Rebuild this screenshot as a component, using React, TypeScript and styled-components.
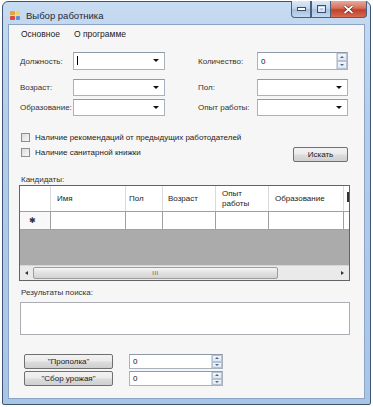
import styled, { createGlobalStyle } from "styled-components";

const GlobalStyle = createGlobalStyle`
  body {
    margin: 0;
    background: #ffffff;
    font-family: "Liberation Sans", Arial, sans-serif;
    font-size: 8px;
    color: #1b1b1b;
  }
`;

const Page = styled.div`
  width: 373px;
  height: 407px;
  padding: 1px 0 0 2px;
  box-sizing: border-box;
`;

const Window = styled.div`
  width: 369px;
  height: 404px;
  box-sizing: border-box;
  border: 1px solid #3d5475;
  border-radius: 6px 6px 2px 2px;
  background: linear-gradient(to bottom, #c7dbf1 0%, #b3cdea 30%, #a9c5e6 100%);
  padding: 0 5px 5px 5px;
  display: flex;
  flex-direction: column;
`;

const TitleBar = styled.div`
  height: 22px;
  display: flex;
  align-items: flex-start;
`;

const AppIcon = styled.div`
  width: 10px;
  height: 9px;
  margin: 9px 0 0 2px;
  display: grid;
  grid-template-columns: 1fr 1fr;
  gap: 1px;
`;

const IconCell = styled.div<{ $c: string }>`
  background: ${(p) => p.$c};
  border-radius: 1px;
`;

const Title = styled.span`
  margin: 8px 0 0 6px;
  font-size: 9.5px;
  color: #1e2a38;
`;

const Caption = styled.div`
  margin-left: auto;
  margin-right: -2px;
  display: flex;
  height: 17px;
  margin-top: -1px;
`;

const CapBtn = styled.div<{ $w: number; $close?: boolean }>`
  width: ${(p) => p.$w}px;
  height: 17px;
  box-sizing: border-box;
  border: 1px solid #4a5f80;
  border-top: none;
  border-left-width: ${(p) => (p.$close ? 0 : 1)}px;
  background: ${(p) =>
    p.$close
      ? "linear-gradient(to bottom, #e9a99a 0%, #d5705c 45%, #c0412a 55%, #d76b4f 100%)"
      : "linear-gradient(to bottom, #dce8f5 0%, #c2d5ec 45%, #a8c0df 55%, #c4d8ef 100%)"};
  border-radius: ${(p) => (p.$close ? "0 0 4px 0" : "0")};
  display: flex;
  align-items: center;
  justify-content: center;
  &:first-child {
    border-radius: 0 0 0 4px;
  }
`;

const Client = styled.div`
  flex: 1;
  background: #f6f6f6;
  border: 1px solid #8ca5c6;
  display: flex;
  flex-direction: column;
  padding: 0 14px 0 11px;
`;

const MenuBar = styled.div`
  height: 18px;
  display: flex;
  align-items: center;
  gap: 14px;
  font-size: 8.5px;
  color: #1a1a1a;
  margin-left: 1px;
`;

const Fields = styled.div`
  margin-top: 9px;
  display: grid;
  grid-template-columns: 53px 92px 33px 59px 91px;
  grid-template-rows: 18px 9px 17px 3px 17px;
  align-items: center;
`;

const FieldLabel = styled.span<{ $col: number; $row: number }>`
  grid-column: ${(p) => p.$col};
  grid-row: ${(p) => p.$row};
  color: #333;
  white-space: nowrap;
`;

const Combo = styled.div<{ $col: number; $row: number; $caret?: boolean }>`
  grid-column: ${(p) => p.$col};
  grid-row: ${(p) => p.$row};
  height: 17px;
  box-sizing: border-box;
  border: 1px solid #a9b3bf;
  border-top-color: #8e9aa8;
  background: #fff;
  position: relative;
  ${(p) =>
    p.$caret &&
    `&::before {
      content: "";
      position: absolute;
      left: 3px;
      top: 3px;
      width: 1px;
      height: 9px;
      background: #000;
    }`}
  &::after {
    content: "";
    position: absolute;
    right: 5px;
    top: 6px;
    border-left: 3px solid transparent;
    border-right: 3px solid transparent;
    border-top: 3px solid #111;
  }
`;

const NumCell = styled.div<{ $col: number; $row: number }>`
  grid-column: ${(p) => p.$col};
  grid-row: ${(p) => p.$row};
`;

const Numeric = styled.div<{ $h?: number }>`
  height: ${(p) => p.$h ?? 15}px;
  box-sizing: border-box;
  border: 1px solid #a9b3bf;
  border-top-color: #8e9aa8;
  background: #fff;
  display: flex;
  align-items: center;
`;

const NumText = styled.span`
  flex: 1;
  padding-left: 3px;
  color: #111;
`;

const Spinner = styled.div`
  width: 10px;
  height: 100%;
  display: flex;
  flex-direction: column;
  border-left: 1px solid #d0d7e0;
`;

const SpinHalf = styled.div<{ $up?: boolean }>`
  flex: 1;
  background: linear-gradient(to bottom, #f4f7fb, #dfe7f1);
  border: 1px solid #b5c2d3;
  display: flex;
  align-items: center;
  justify-content: center;
  &::after {
    content: "";
    border-left: 2px solid transparent;
    border-right: 2px solid transparent;
    ${(p) => (p.$up ? "border-bottom: 2px solid #4a6890;" : "border-top: 2px solid #4a6890;")}
  }
`;

const Checks = styled.div`
  margin-top: 16px;
  display: flex;
  flex-direction: column;
  gap: 5px;
  padding-right: 2px;
`;

const CheckRow = styled.div`
  display: flex;
  align-items: center;
  gap: 5px;
  height: 10px;
  padding-left: 1px;
`;

const Box = styled.span`
  width: 9px;
  height: 9px;
  box-sizing: border-box;
  border: 1px solid #8e8f8f;
  background: linear-gradient(135deg, #dcdcdc, #f7f7f7);
`;

const PushButton = styled.div<{ $w?: number }>`
  width: ${(p) => (p.$w ? `${p.$w}px` : "auto")};
  height: 15px;
  box-sizing: border-box;
  border: 1px solid #707070;
  border-radius: 2px;
  background: linear-gradient(to bottom, #f2f2f2 0%, #ebebeb 48%, #dddddd 52%, #cfcfcf 100%);
  display: flex;
  align-items: center;
  justify-content: center;
  color: #1a1a1a;
`;

const SearchButton = styled(PushButton)`
  margin-left: auto;
  align-self: flex-start;
  margin-bottom: -5px;
`;

const SectionLabel = styled.div<{ $top: number }>`
  margin-top: ${(p) => p.$top}px;
  height: 11px;
  line-height: 11px;
  color: #333;
  padding-left: 1px;
`;

const DataGrid = styled.div`
  width: 331px;
  height: 96px;
  box-sizing: border-box;
  border: 1px solid #646464;
  display: flex;
  flex-direction: column;
  background: #ababab;
  margin-left: -1px;
  overflow: hidden;
`;

const GridRow = styled.div<{ $h: number }>`
  height: ${(p) => p.$h}px;
  display: grid;
  grid-template-columns: 31px 75px 37px 53px 53px 75px 1fr;
  background: #fff;
  border-bottom: 1px solid #a0a0a0;
  box-sizing: border-box;
`;

const Cell = styled.div<{ $header?: boolean; $pad?: number }>`
  border-right: 1px solid ${(p) => (p.$header ? "#dadada" : "#a0a0a0")};
  display: flex;
  align-items: center;
  padding-left: ${(p) => p.$pad ?? 6}px;
  line-height: 10px;
  color: #222;
  overflow: hidden;
  white-space: nowrap;
  &:last-child {
    border-right: none;
  }
`;

const NewRowMark = styled(Cell)`
  padding-left: 9px;
  font-size: 8px;
  color: #333;
  background: #f8f8f8;
`;

const ClippedMark = styled.div`
  width: 2px;
  height: 10px;
  background: #333;
  margin-top: -4px;
`;

const GrayArea = styled.div`
  flex: 1;
`;

const HScroll = styled.div`
  height: 14px;
  display: flex;
  align-items: stretch;
  background: #eaeaea;
  border-top: 1px solid #d6d6d6;
`;

const ScrollArrow = styled.div<{ $right?: boolean }>`
  width: 13px;
  display: flex;
  align-items: center;
  justify-content: center;
  &::after {
    content: "";
    border-top: 2px solid transparent;
    border-bottom: 2px solid transparent;
    ${(p) => (p.$right ? "border-left: 3px solid #333;" : "border-right: 3px solid #333;")}
  }
`;

const Thumb = styled.div`
  width: 245px;
  margin: 1px 0;
  box-sizing: border-box;
  border: 1px solid #9c9c9c;
  border-radius: 2px;
  background: linear-gradient(to bottom, #f5f5f5, #e1e1e1 50%, #d3d3d3);
  display: flex;
  align-items: center;
  justify-content: center;
  font-size: 6px;
  letter-spacing: 0.5px;
  color: #555;
`;

const Track = styled.div`
  flex: 1;
`;

const ResultBox = styled.div`
  margin-top: 4px;
  width: 330px;
  height: 33px;
  box-sizing: border-box;
  border: 1px solid #abadb3;
  background: #fff;
`;

const Actions = styled.div`
  margin-top: 19px;
  display: grid;
  grid-template-columns: 89px 94px;
  column-gap: 16px;
  row-gap: 2px;
  padding-left: 4px;
`;

function Spin() {
  return (
    <Spinner>
      <SpinHalf $up />
      <SpinHalf />
    </Spinner>
  );
}

export default function App() {
  return (
    <Page>
      <GlobalStyle />
      <Window>
        <TitleBar>
          <AppIcon>
            <IconCell $c="#e8a23a" />
            <IconCell $c="#f3d257" />
            <IconCell $c="#d84a3a" />
            <IconCell $c="#5b8fd6" />
          </AppIcon>
          <Title>Выбор работника</Title>
          <Caption>
            <CapBtn $w={20}>
              <svg width="9" height="4" viewBox="0 0 9 4">
                <rect x="0.5" y="0.5" width="8" height="3" fill="#fff" stroke="#3b4f6e" />
              </svg>
            </CapBtn>
            <CapBtn $w={20}>
              <svg width="9" height="8" viewBox="0 0 9 8">
                <rect x="0.5" y="0.5" width="8" height="7" fill="none" stroke="#3b4f6e" />
                <rect x="2" y="2.5" width="5" height="3.5" fill="none" stroke="#fff" />
              </svg>
            </CapBtn>
            <CapBtn $w={36} $close>
              <svg width="11" height="9" viewBox="0 0 11 9">
                <path d="M1.5 1 L9.5 8 M9.5 1 L1.5 8" stroke="#5a1a10" strokeWidth="3" />
                <path d="M1.5 1 L9.5 8 M9.5 1 L1.5 8" stroke="#fff" strokeWidth="1.8" />
              </svg>
            </CapBtn>
          </Caption>
        </TitleBar>
        <Client>
          <MenuBar>
            <span>Основное</span>
            <span>О программе</span>
          </MenuBar>
          <Fields>
            <FieldLabel $col={1} $row={1}>Должность:</FieldLabel>
            <Combo $col={2} $row={1} $caret style={{ height: 18 }} />
            <FieldLabel $col={4} $row={1}>Количество:</FieldLabel>
            <NumCell $col={5} $row={1}>
              <Numeric $h={18}>
                <NumText>0</NumText>
                <Spin />
              </Numeric>
            </NumCell>
            <FieldLabel $col={1} $row={3}>Возраст:</FieldLabel>
            <Combo $col={2} $row={3} />
            <FieldLabel $col={4} $row={3}>Пол:</FieldLabel>
            <Combo $col={5} $row={3} />
            <FieldLabel $col={1} $row={5}>Образование:</FieldLabel>
            <Combo $col={2} $row={5} />
            <FieldLabel $col={4} $row={5}>Опыт работы:</FieldLabel>
            <Combo $col={5} $row={5} />
          </Fields>
          <Checks>
            <CheckRow>
              <Box />
              <span>Наличие рекомендаций от предыдущих работодателей</span>
            </CheckRow>
            <CheckRow>
              <Box />
              <span>Наличие санитарной книжки</span>
              <SearchButton $w={55}>Искать</SearchButton>
            </CheckRow>
          </Checks>
          <SectionLabel $top={17}>Кандидаты:</SectionLabel>
          <DataGrid>
            <GridRow $h={26}>
              <Cell $header />
              <Cell $header>Имя</Cell>
              <Cell $header $pad={3}>Пол</Cell>
              <Cell $header $pad={5}>Возраст</Cell>
              <Cell $header>
                Опыт
                <br />
                работы
              </Cell>
              <Cell $header>Образование</Cell>
              <Cell $header $pad={3}>
                <ClippedMark />
              </Cell>
            </GridRow>
            <GridRow $h={18}>
              <NewRowMark>✱</NewRowMark>
              <Cell />
              <Cell />
              <Cell />
              <Cell />
              <Cell />
              <Cell />
            </GridRow>
            <GrayArea />
            <HScroll>
              <ScrollArrow />
              <Thumb>III</Thumb>
              <Track />
              <ScrollArrow $right />
            </HScroll>
          </DataGrid>
          <SectionLabel $top={6}>Результаты поиска:</SectionLabel>
          <ResultBox />
          <Actions>
            <PushButton>"Прополка"</PushButton>
            <Numeric>
              <NumText>0</NumText>
              <Spin />
            </Numeric>
            <PushButton>"Сбор урожая"</PushButton>
            <Numeric>
              <NumText>0</NumText>
              <Spin />
            </Numeric>
          </Actions>
        </Client>
      </Window>
    </Page>
  );
}
